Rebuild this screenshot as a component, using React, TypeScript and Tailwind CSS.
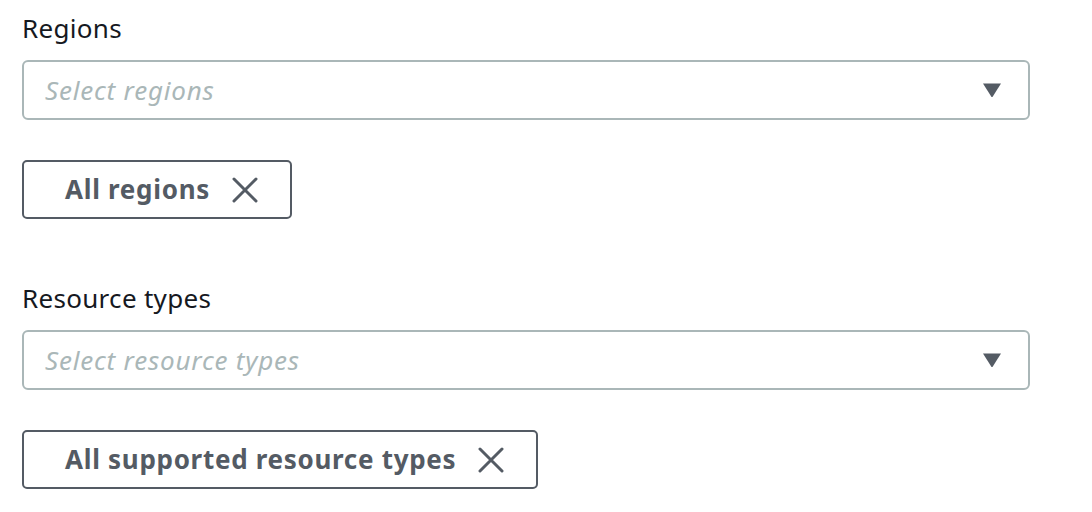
import React from "react";

const FONT = "font-['Noto_Sans',sans-serif]";

function Caret() {
  return (
    <svg width="20" height="16" viewBox="0 0 20 16" aria-hidden>
      <path d="M1 1.5 L19 1.5 L10.8 14.6 Q10 15.6 9.2 14.6 Z" fill="#545b64" />
    </svg>
  );
}

function Close() {
  return (
    <svg width="26" height="26" viewBox="0 0 26 26" aria-hidden>
      <path d="M2 2 L24 24 M24 2 L2 24" stroke="#545b64" strokeWidth="3" strokeLinecap="round" />
    </svg>
  );
}

function Field({ label, placeholder, token }: { label: string; placeholder: string; token: string }) {
  return (
    <div className="flex flex-col">
      <label className="text-[26px] leading-[34px] tracking-[0.3px] text-[#16191f]">{label}</label>
      <div className="mt-[15px] flex h-[60px] w-[1008px] items-center justify-between rounded-[6px] border-2 border-[#aab7b8] bg-white pl-[21px] pr-[26px]">
        <span className="text-[26px] italic tracking-[0.8px] text-[#aab7b8]">{placeholder}</span>
        <Caret />
      </div>
      <div className="mt-[40px] flex">
        <div className="flex h-[59px] items-center gap-[22px] rounded-[5px] border-2 border-[#545b64] pl-[41px] pr-[32px]">
          <span className="text-[26px] font-bold tracking-[0.7px] text-[#545b64]">{token}</span>
          <Close />
        </div>
      </div>
    </div>
  );
}

export default function App() {
  return (
    <div className={`${FONT} h-[512px] w-[1092px] bg-white pl-[22px] pt-[11px]`}>
      <div className="flex flex-col gap-[62px]">
        <Field label="Regions" placeholder="Select regions" token="All regions" />
        <Field label="Resource types" placeholder="Select resource types" token="All supported resource types" />
      </div>
    </div>
  );
}
